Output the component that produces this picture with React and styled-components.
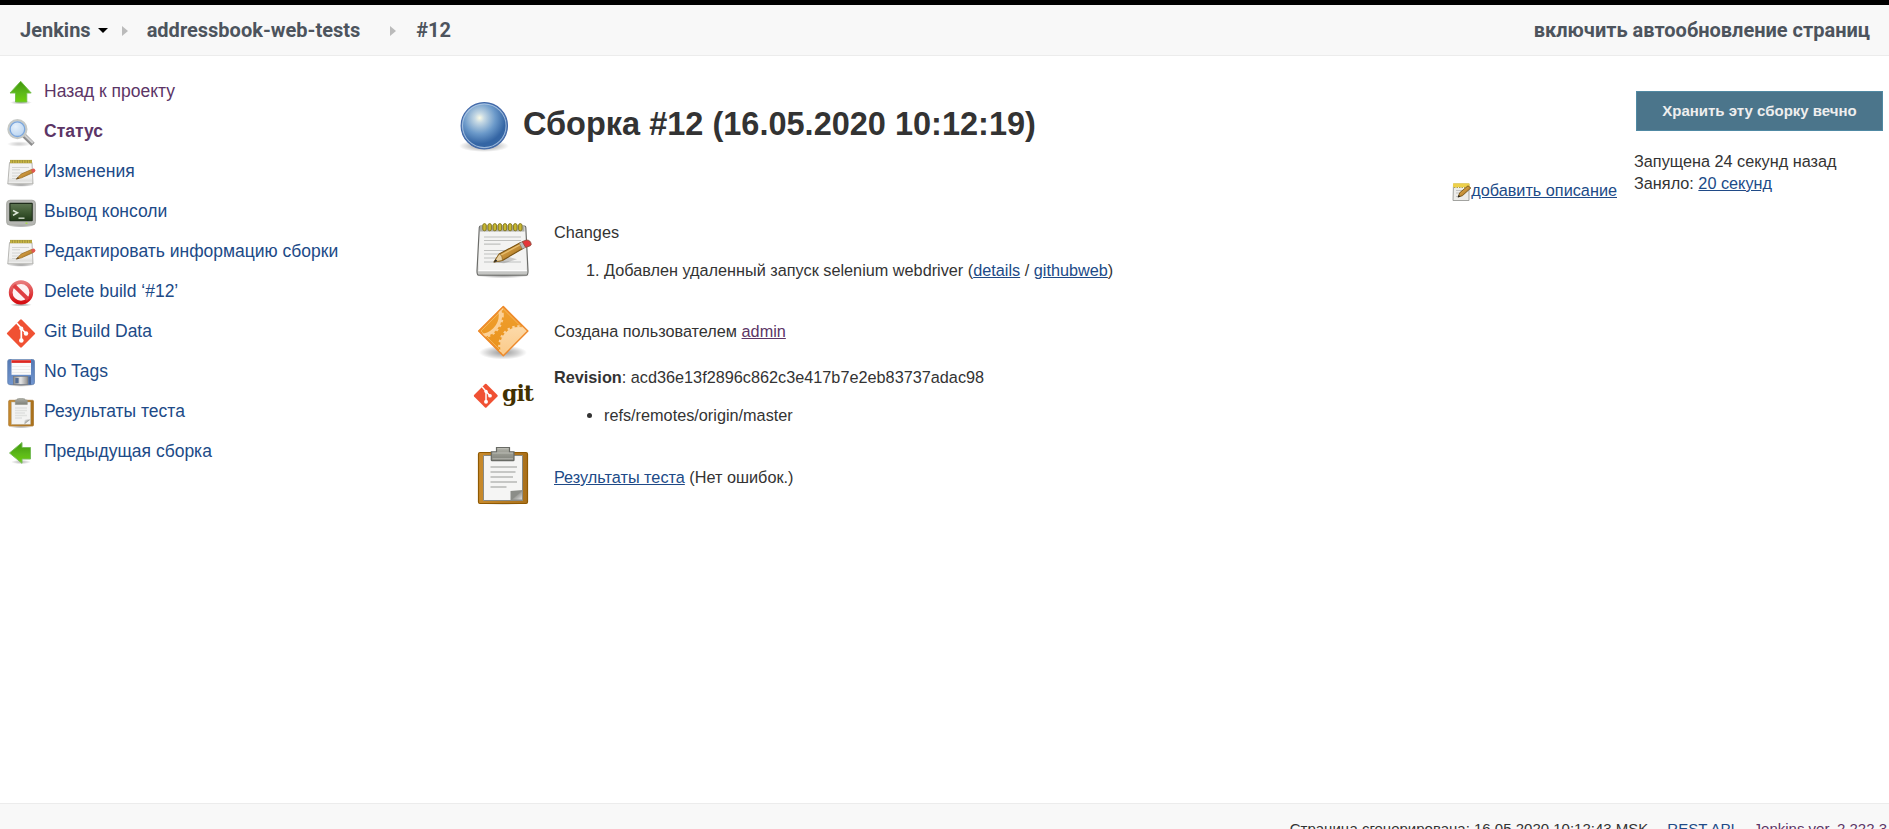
import React from "react";
import styled, { createGlobalStyle } from "styled-components";

const GlobalStyle = createGlobalStyle`
  * { box-sizing: border-box; }
  html, body { margin: 0; padding: 0; height: 100%; overflow: hidden; background: #fff; }
  body { font-family: "Liberation Sans", Arial, sans-serif; font-size: 16.25px; line-height: 22px; color: #333; }
  #root { height: 100%; }
  svg { display: block; flex: none; }
`;

const Page = styled.div`
  height: 829px;
  display: flex;
  flex-direction: column;
  overflow: hidden;
  border-top: 5px solid #000;
`;

const Header = styled.header`
  height: 51px;
  flex: none;
  display: flex;
  align-items: center;
  justify-content: space-between;
  padding: 0 19px 0 20px;
  background: #f8f8f8;
  border-bottom: 1px solid #ececec;
  font: 700 20px/50px Roboto, sans-serif;
  color: #4d545d;
  white-space: nowrap;
`;

const Crumbs = styled.nav`
  display: flex;
  align-items: center;
`;

const Caret = styled.span`
  margin: 0 0 0 7px;
  border: 5px solid transparent;
  border-top: 5px solid #000;
  border-bottom: 0;
`;

const Separator = styled.span`
  margin: 1px ${(p) => p.$after}px 0 ${(p) => p.$before}px;
  border: 5px solid transparent;
  border-left: 6px solid #bbb;
  border-right: 0;
`;

const Body = styled.div`
  flex: 1;
  display: flex;
  min-height: 0;
`;

const Sidebar = styled.aside`
  width: 454px;
  flex: none;
  padding: 15px 0 0 6px;
`;

const Task = styled.a`
  height: 40px;
  display: flex;
  align-items: center;
  gap: 8px;
  font-size: 17.5px;
  font-weight: ${(p) => (p.$current ? 700 : 400)};
  color: ${(p) => (p.$visited ? "#5c3566" : "#204a87")};
  white-space: nowrap;
  svg { margin-top: 4px; }
`;

const Main = styled.main`
  flex: 1;
  display: flex;
  justify-content: space-between;
  white-space: nowrap;
`;

const Report = styled.section`
  padding-top: 41px;
`;

const Title = styled.h1`
  margin: 0;
  height: 60px;
  display: flex;
  align-items: center;
  gap: 9px;
  font-size: 32.5px;
  line-height: 38px;
  font-weight: 700;
  color: #333;
  span { margin-top: -6px; }
`;

const Facts = styled.div`
  padding: 63px 0 0 19px;
`;

const Fact = styled.div`
  display: flex;
  height: ${(p) => p.$height}px;
`;

const FactIcon = styled.div`
  width: 60px;
  flex: none;
  padding-top: ${(p) => p.$top || 0}px;
`;

const FactText = styled.div`
  padding: ${(p) => p.$top}px 0 0 21px;
`;

const Entries = styled.ul`
  list-style: ${(p) => (p.$ordered ? "decimal" : "disc")};
  margin: 16px 0 0;
  padding-left: 50px;
`;

const Link = styled.a`
  color: ${(p) => (p.$visited ? "#5c3566" : "#204a87")};
  text-decoration: underline;
`;

const Aside = styled.section`
  display: flex;
  padding: 35px 6px 0 0;
`;

const AddDescription = styled.div`
  display: flex;
  align-items: flex-start;
  margin: 88px 17px 0 0;
  height: 22px;
  svg { margin: 3px -1px 0 0; }
`;

const BuildInfo = styled.div`
  width: 249px;
`;

const KeepButton = styled.button`
  display: block;
  width: 247px;
  height: 40px;
  margin: 0 0 19px 2px;
  padding: 0;
  border: 1px solid #5089a3;
  background: #4b758b;
  color: #eee;
  font: 700 15px/38px "Liberation Sans", Arial, sans-serif;
`;

const Footer = styled.footer`
  height: 26px;
  flex: none;
  display: flex;
  justify-content: flex-end;
  gap: 19px;
  padding: 15px 2px 0 0;
  overflow: hidden;
  background: #f8f8f8;
  border-top: 1px solid #ececec;
  font-size: 15px;
  line-height: 20px;
  white-space: nowrap;
`;

const FooterLink = styled.a`
  color: ${(p) => (p.$visited ? "#5c3566" : "#204a87")};
`;

const HiddenSvg = styled.svg`
  position: absolute;
`;

const Defs = () => (
  <HiddenSvg width="0" height="0">
    <defs>
      <linearGradient id="green" x1="0" y1="0" x2="0" y2="1">
        <stop offset="0" stopColor="#3f960a" />
        <stop offset=".55" stopColor="#5cb81a" />
        <stop offset="1" stopColor="#6fd00c" />
      </linearGradient>
      <linearGradient id="paper" x1="0" y1="0" x2="0" y2="1">
        <stop offset="0" stopColor="#f4f4f4" />
        <stop offset=".7" stopColor="#f0f0ee" />
        <stop offset="1" stopColor="#d0d0ce" />
      </linearGradient>
      <linearGradient id="wood" x1="0" y1="0" x2="1" y2="1">
        <stop offset="0" stopColor="#e8b858" />
        <stop offset=".5" stopColor="#c8923a" />
        <stop offset="1" stopColor="#8a5c10" />
      </linearGradient>
      <linearGradient id="screen" x1="0" y1="0" x2="0" y2="1">
        <stop offset="0" stopColor="#5c7450" />
        <stop offset=".5" stopColor="#3f5a33" />
        <stop offset="1" stopColor="#223c1a" />
      </linearGradient>
      <linearGradient id="ban" x1="0" y1="0" x2="0" y2="1">
        <stop offset="0" stopColor="#e87a7a" />
        <stop offset="1" stopColor="#d60d12" />
      </linearGradient>
      <linearGradient id="disk" x1="0" y1="0" x2="0" y2="1">
        <stop offset="0" stopColor="#5479b4" />
        <stop offset="1" stopColor="#7196d0" />
      </linearGradient>
      <linearGradient id="steel" x1="0" y1="0" x2="1" y2="0">
        <stop offset="0" stopColor="#8a8a8a" />
        <stop offset=".5" stopColor="#e4e4e4" />
        <stop offset="1" stopColor="#8c8c8c" />
      </linearGradient>
      <linearGradient id="clip" x1="0" y1="0" x2="0" y2="1">
        <stop offset="0" stopColor="#b0b1a8" />
        <stop offset="1" stopColor="#7e8078" />
      </linearGradient>
      <linearGradient id="fold" x1="0" y1="0" x2="1" y2="1">
        <stop offset="0" stopColor="#f4f4f4" />
        <stop offset=".5" stopColor="#9b9c98" />
        <stop offset="1" stopColor="#dadada" />
      </linearGradient>
      <linearGradient id="board" x1="0" y1="0" x2="1" y2="0">
        <stop offset="0" stopColor="#c88a2c" />
        <stop offset="1" stopColor="#a9701b" />
      </linearGradient>
      <radialGradient id="lens" cx=".4" cy=".35" r=".7">
        <stop offset="0" stopColor="#e6f1fc" />
        <stop offset="1" stopColor="#b2cfee" />
      </radialGradient>
      <radialGradient id="ball" cx=".4" cy=".33" r=".68">
        <stop offset="0" stopColor="#fbfbe6" />
        <stop offset=".15" stopColor="#c6d9e4" />
        <stop offset=".5" stopColor="#6c9aca" />
        <stop offset=".82" stopColor="#3465a4" />
        <stop offset="1" stopColor="#3465a4" />
      </radialGradient>
      <radialGradient id="shade">
        <stop offset="0" stopColor="#000" stopOpacity=".4" />
        <stop offset=".6" stopColor="#000" stopOpacity=".18" />
        <stop offset="1" stopColor="#000" stopOpacity="0" />
      </radialGradient>
      <linearGradient id="gearDark" x1="0" y1="0" x2="0" y2="1">
        <stop offset="0" stopColor="#f0a030" />
        <stop offset="1" stopColor="#e89018" />
      </linearGradient>
      <linearGradient id="gearLight" x1="0" y1="0" x2="0" y2="1">
        <stop offset="0" stopColor="#fcd9a8" />
        <stop offset="1" stopColor="#fac57e" />
      </linearGradient>
    </defs>
  </HiddenSvg>
);

const Icon = ({ size = 30, children }) => (
  <svg width={size} height={size} viewBox={`0 0 ${size} ${size}`}>
    {children}
  </svg>
);

const UpIcon = () => (
  <Icon>
    <ellipse cx="15" cy="24.500" rx="11" ry="2" fill="url(#shade)" opacity=".8" />
    <path d="M14.700 3.300 25.200 15h-4.400v9H9.500v-9H4Z" fill="url(#green)" stroke="#6fbd45" strokeWidth=".9" strokeLinejoin="round" />
  </Icon>
);

const LeftIcon = () => (
  <Icon>
    <ellipse cx="15" cy="24" rx="10" ry="2.200" fill="url(#shade)" opacity=".7" />
    <path d="M3.500 15 16 4.500v5h8.500V21H16v4.300Z" fill="url(#green)" stroke="#79bd5a" strokeWidth="1" strokeLinejoin="round" />
  </Icon>
);

const SearchIcon = () => (
  <Icon>
    <ellipse cx="13" cy="26" rx="12" ry="2.800" fill="url(#shade)" opacity=".5" />
    <path d="m18 17.500 9 8.800" stroke="#8c8c8c" strokeWidth="4.600" />
    <path d="m18.500 17 8.500 8" stroke="#d0d0d0" strokeWidth="2.200" />
    <circle cx="11.400" cy="11.200" r="9" fill="url(#lens)" stroke="#c6c9c6" strokeWidth="2.200" />
    <circle cx="11.400" cy="11.200" r="7.300" fill="none" stroke="#7ba6dc" strokeWidth="1.300" />
  </Icon>
);

const NotesIcon = () => (
  <Icon>
    <ellipse cx="15" cy="27" rx="13" ry="1.800" fill="url(#shade)" />
    <path d="M3.500 4.500h22.500l1 21.500h-25.200Z" fill="url(#paper)" stroke="#b0b0ad" strokeWidth=".9" strokeLinejoin="round" />
    <path d="M2.500 24.200h23.500" stroke="#fff" strokeWidth=".8" />
    <path d="M4 3.600h22" stroke="#a3943d" strokeWidth="3.400" />
    <path d="M4.500 3.600h21" stroke="#cbb945" strokeWidth="2.600" strokeDasharray="1.300 1.200" />
    <path d="M6 9.500h17M6 11.800h8M6 15h15M6 18h12M6 20.500h7" stroke="#cfd0ce" strokeWidth=".9" />
    <path d="m10.500 21 4.600-4.900 10.500-4.600 1.700 3-11.800 5.300Z" fill="url(#wood)" stroke="#9a7028" strokeWidth=".8" strokeLinejoin="round" />
    <path d="m25 11.800 2.200-1.200q1.700-.2 2.200 2l-.6 1.400-2.200 1Z" fill="#e05850" />
    <path d="m9.700 21.600 2.200-2.500 1.500 1.400Z" fill="#6c5226" />
  </Icon>
);

const ConsoleIcon = () => (
  <Icon>
    <ellipse cx="15" cy="28" rx="12" ry="1.500" fill="url(#shade)" />
    <rect x=".6" y="2.200" width="28.900" height="25" rx="3.500" fill="#b6b7b3" stroke="#a0a19b" strokeWidth=".8" />
    <rect x="3.300" y="4.800" width="23.500" height="18.500" rx="1" fill="#1f2c1b" />
    <rect x="4.500" y="6" width="21.200" height="16.300" fill="url(#screen)" />
    <path d="m7 12.500 4.500 2.300-4.500 2.600" fill="none" stroke="#dfe8da" strokeWidth="1.600" />
    <path d="M12.500 20.200h6" stroke="#cdd8c8" strokeWidth="1.400" />
    <path d="M19.500 25.200h2" stroke="#a5e03c" strokeWidth="1.300" />
  </Icon>
);

const BanIcon = () => (
  <Icon>
    <ellipse cx="15" cy="26.800" rx="11" ry="1.800" fill="url(#shade)" />
    <circle cx="15" cy="14.400" r="10.300" fill="#fdf3f3" stroke="url(#ban)" strokeWidth="3.800" />
    <path d="m7.800 7.400 14.400 14" stroke="#df3f42" strokeWidth="4" />
  </Icon>
);

const GitMark = () => (
  <g>
    <rect x="4.700" y="4.700" width="20.600" height="20.600" rx="1.200" fill="#f05133" transform="rotate(45 15 15)" />
    <path d="m10.600 4.500 4.700 5.200v12M15.500 10l4.300 5" fill="none" stroke="#fff" strokeWidth="1.700" />
    <circle cx="15.300" cy="10" r="2" fill="#fff" />
    <circle cx="20" cy="15" r="2.200" fill="#fff" />
    <circle cx="15.300" cy="22" r="2.300" fill="#fff" />
  </g>
);

const GitIcon = () => (
  <svg width="30" height="30" viewBox="0.200 -0.500 29.600 30">
    <GitMark />
  </svg>
);

const DiskIcon = () => (
  <Icon>
    <ellipse cx="15" cy="27.300" rx="13" ry="1.500" fill="url(#shade)" />
    <rect x="1.800" y="1.500" width="26.600" height="25" rx="1.800" fill="url(#disk)" stroke="#6080b0" strokeWidth=".9" />
    <rect x="5.500" y="1.800" width="19.500" height="15" fill="#fafafa" />
    <rect x="5.500" y="2.200" width="19.500" height="2.700" fill="#dd2722" />
    <path d="M6 8.500h18.500M6 11.500h18.500M6 14.500h18.500" stroke="#e8e8e8" strokeWidth=".8" />
    <rect x="7.500" y="18.500" width="14.500" height="8" fill="url(#steel)" stroke="#777" strokeWidth=".6" />
    <rect x="9.300" y="20" width="3.300" height="5.200" fill="#526c94" />
    <rect x="22.500" y="18.500" width="2.500" height="8" fill="#476496" />
  </Icon>
);

const ClipIcon = () => (
  <Icon>
    <ellipse cx="15" cy="29" rx="12" ry="1" fill="url(#shade)" />
    <rect x="2.700" y="2.300" width="24.800" height="25.700" rx="1" fill="url(#board)" stroke="#ab7a34" strokeWidth=".8" />
    <rect x="5.400" y="4" width="19.200" height="22.300" fill="#f3f3f2" stroke="#b9b1a0" strokeWidth=".5" />
    <path d="M9 10h12M9 12.500h12M9 15h10M9 17.500h12M9 20h7" stroke="#e0e1df" strokeWidth="1.600" />
    <path d="M18.500 26.300v-4.800h6Z" fill="url(#fold)" />
    <path d="M11 1q4-1.600 8 0v1h2.300v4.500H9.300V2H11Z" fill="url(#clip)" stroke="#94968c" strokeWidth=".6" />
  </Icon>
);

const BallIcon = () => (
  <Icon size={60}>
    <ellipse cx="30" cy="49" rx="25" ry="6" fill="url(#shade)" />
    <circle cx="30.300" cy="28.800" r="23.200" fill="url(#ball)" stroke="#4268a8" strokeWidth="1.100" />
    <circle cx="30.300" cy="28.800" r="21.800" fill="none" stroke="#b4cbe6" strokeWidth="1.100" opacity=".8" />
  </Icon>
);

const BigNotesIcon = () => (
  <Icon size={60}>
    <ellipse cx="30" cy="55.500" rx="27" ry="2.800" fill="url(#shade)" />
    <path d="M7.500 6h44q1.200 0 1.300 1.500l2.200 43.500q0 4.200-1.600 4.200H5.600Q4 55.200 4 51L6.300 7.500Q6.400 6 7.500 6Z" fill="url(#paper)" stroke="#6b6c69" strokeWidth="1.200" />
    <path d="M7.800 11h43.600l2.200 40h-48Z" fill="#f3f3f2" />
    <path d="M5.200 51.300h49l-.2 3H5.500Z" fill="#c5c6c4" />
    <path d="M5.500 50.700h48.500" stroke="#fff" strokeWidth="1" />
    <path d="M7 6.500h44.500v5H7Z" fill="#adaea8" />
    {[11.500, 16.700, 21.800, 26.900, 32, 37.100, 42.300, 47.300].map((x) => (
      <rect key={x} x={x - 1.700} y="3.600" width="3.400" height="7.200" rx="1.700" fill="#c9b831" stroke="#81751b" strokeWidth=".9" />
    ))}
    <path d="M11 17h37M11 20.500h37M11 24.200h16.500M11 30.500h34M11 34h24M11 38h15M11 42h37" stroke="#c0c1bf" strokeWidth="1.200" />
    <path d="m21 42.300 12-6 11 3-13 4Z" fill="#222" opacity=".2" />
    <path d="m21 42 5.200-8 21.500-11.500 3 5.600-21.300 12.300Z" fill="url(#wood)" stroke="#7a5312" strokeWidth="1.100" strokeLinejoin="round" />
    <path d="m28 35 20-10.700" stroke="#e8bf70" strokeWidth="1.300" />
    <path d="m21 42 5.200-8q3.200 1 3.200 6.400Z" fill="#ead2a4" stroke="#8c6620" strokeWidth=".7" />
    <path d="m20.500 42.600 2.300-3.400 1.500 1.800Z" fill="#222" />
    <path d="m46.300 23.300 3.300-1.800 3.200 5.500-3.300 2Z" fill="#bbb" stroke="#82746a" strokeWidth=".6" />
    <path d="m49.300 21.600 4.200-1.600q4 0 4.700 4.200l-.8 1.500-4.700 1.800Z" fill="#e5353a" stroke="#8b5040" strokeWidth=".9" />
  </Icon>
);

const GearsIcon = () => (
  <Icon size={60}>
    <ellipse cx="30" cy="50.500" rx="24" ry="7" fill="url(#shade)" />
    <clipPath id="diamond"><path d="M30.300 4 55.300 29 30.300 54 5.300 29Z" /></clipPath>
    <g clipPath="url(#diamond)">
      <rect width="60" height="60" fill="url(#gearDark)" />
      <circle cx="7" cy="13" r="20.500" fill="none" stroke="#fbd096" strokeWidth="3.400" />
      <circle cx="7" cy="13" r="22.800" fill="none" stroke="#fbd096" strokeWidth="2" strokeDasharray="2.400 2.600" />
      <circle cx="46" cy="44" r="19" fill="url(#gearLight)" />
      <circle cx="46" cy="44" r="19.600" fill="none" stroke="#fbd29b" strokeWidth="2.400" strokeDasharray="2.400 2.600" />
    </g>
    <path d="M30.300 4.500 54.800 29 30.300 53.700 5.700 29Z" fill="none" stroke="#ee8a2c" strokeWidth="1.500" strokeLinejoin="round" />
    <path d="M30.300 6.800 52.500 29 30.300 51.400 8 29Z" fill="none" stroke="#ffd292" strokeWidth=".9" opacity=".5" />
  </Icon>
);

const GitWordmark = styled.div`
  display: flex;
  align-items: flex-start;
  gap: 3.500px;
  width: 60px;
  height: 30px;
`;

const GitWord = styled.span`
  font: 700 22px/25px "DejaVu Serif", serif;
  letter-spacing: -1px;
  color: #413000;
`;

const GitLogo = () => (
  <GitWordmark>
    <svg width="25.500" height="30" viewBox="0 0 25.500 30">
      <g transform="translate(0 2) scale(.85)">
        <GitMark />
      </g>
    </svg>
    <GitWord>git</GitWord>
  </GitWordmark>
);

const BigClipIcon = () => (
  <Icon size={60}>
    <ellipse cx="30" cy="58" rx="25" ry="2" fill="url(#shade)" />
    <rect x="5.500" y="7.500" width="49" height="51" rx="1.500" fill="url(#board)" stroke="#8f5902" strokeWidth="1.200" />
    <path d="M10.500 10.500h39v45h-39Z" fill="#f5f5f4" stroke="#888a85" strokeWidth="1" />
    <path d="M17.500 22h26.500M17.500 27h25M17.500 32h22.500M17.500 37h26.500M17.500 42h16" stroke="#c6c7c5" strokeWidth="2" />
    <path d="M37.500 55.300V46l12-1v10.300Z" fill="#8b8d88" />
    <path d="m39 54.500 10-8.300v8.300Z" fill="url(#fold)" />
    <path d="M23.500 2.500h13v4.300H41v8.200q0 .7-.7.700H19q-.7 0-.7-.7V6.800h5.200Z" fill="url(#clip)" stroke="#686a65" strokeWidth="1.200" />
    <path d="M24.500 3.700h11M19.500 8h20.500M19.500 13.800h20.500" stroke="#c2c3bc" strokeWidth=".8" />
  </Icon>
);

const SmallNotesIcon = () => (
  <Icon size={20}>
    <path d="M1.500 2h15.500v16.500h-16Z" fill="#ececea" stroke="#999a96" strokeWidth=".9" />
    <path d="M1 1.300h16.500v3.700H1Z" fill="#edd04a" />
    <path d="M2 5.500h14.500" stroke="#b7a43c" strokeWidth="1" strokeDasharray="1.500 1" />
    <path d="M4 8.500h8M4 11h5M4 14.500h3" stroke="#c2c2c2" />
    <path d="m6.200 15 1.500-4.200 8.300-7 2.800 2.200-8.400 7.700Z" fill="url(#wood)" stroke="#765315" strokeWidth=".9" />
    <path d="m5.700 15.500.9-2.400 1.800 1.300Z" fill="#222" />
  </Icon>
);

const TASKS = [
  { label: "Назад к проекту", icon: UpIcon, visited: true },
  { label: "Статус", icon: SearchIcon, visited: true, current: true },
  { label: "Изменения", icon: NotesIcon },
  { label: "Вывод консоли", icon: ConsoleIcon },
  { label: "Редактировать информацию сборки", icon: NotesIcon },
  { label: "Delete build ‘#12’", icon: BanIcon },
  { label: "Git Build Data", icon: GitIcon },
  { label: "No Tags", icon: DiskIcon },
  { label: "Результаты теста", icon: ClipIcon },
  { label: "Предыдущая сборка", icon: LeftIcon },
];

export default function App() {
  return (
    <>
      <GlobalStyle />
      <Defs />
      <Page>
        <Header>
          <Crumbs>
            <span>Jenkins</span>
            <Caret />
            <Separator $before={14} $after={19} />
            <span>addressbook-web-tests</span>
            <Separator $before={30} $after={20} />
            <span>#12</span>
          </Crumbs>
          <span>включить автообновление страниц</span>
        </Header>
        <Body>
          <Sidebar>
            {TASKS.map(({ label, icon: TaskIcon, visited, current }) => (
              <Task key={label} $visited={visited} $current={current}>
                <TaskIcon />
                <span>{label}</span>
              </Task>
            ))}
          </Sidebar>
          <Main>
            <Report>
              <Title>
                <BallIcon />
                <span>Сборка #12 (16.05.2020 10:12:19)</span>
              </Title>
              <Facts>
                <Fact $height={82}>
                  <FactIcon>
                    <BigNotesIcon />
                  </FactIcon>
                  <FactText $top={1}>
                    Changes
                    <Entries as="ol" $ordered>
                      <li>
                        Добавлен удаленный запуск selenium webdriver (<Link>details</Link> / <Link>githubweb</Link>)
                      </li>
                    </Entries>
                  </FactText>
                </Fact>
                <Fact $height={60}>
                  <FactIcon>
                    <GearsIcon />
                  </FactIcon>
                  <FactText $top={18}>
                    Создана пользователем <Link $visited>admin</Link>
                  </FactText>
                </Fact>
                <Fact $height={83}>
                  <FactIcon $top={19}>
                    <GitLogo />
                  </FactIcon>
                  <FactText $top={4}>
                    <b>Revision</b>: acd36e13f2896c862c3e417b7e2eb83737adac98
                    <Entries>
                      <li>refs/remotes/origin/master</li>
                    </Entries>
                  </FactText>
                </Fact>
                <Fact $height={64}>
                  <FactIcon>
                    <BigClipIcon />
                  </FactIcon>
                  <FactText $top={21}>
                    <Link>Результаты теста</Link> (Нет ошибок.)
                  </FactText>
                </Fact>
              </Facts>
            </Report>
            <Aside>
              <AddDescription>
                <SmallNotesIcon />
                <Link>добавить описание</Link>
              </AddDescription>
              <BuildInfo>
                <KeepButton>Хранить эту сборку вечно</KeepButton>
                <div>Запущена 24 секунд назад</div>
                <div>
                  Заняло: <Link>20 секунд</Link>
                </div>
              </BuildInfo>
            </Aside>
          </Main>
        </Body>
        <Footer>
          <span>Страница сгенерирована: 16.05.2020 10:12:43 MSK</span>
          <FooterLink>REST API</FooterLink>
          <FooterLink $visited>Jenkins ver. 2.222.3</FooterLink>
        </Footer>
      </Page>
    </>
  );
}
